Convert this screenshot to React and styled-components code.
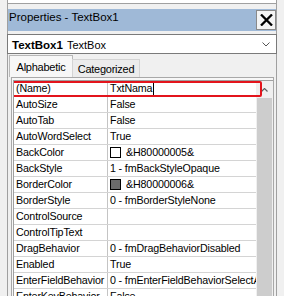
import React from 'react';
import styled, { createGlobalStyle } from 'styled-components';

const Global = createGlobalStyle`
  html, body { margin: 0; padding: 0; background: #f0f0f0; overflow: hidden; }
  body { font-family: "Liberation Sans", Arial, sans-serif; color: #000; }
  #root { height: 296px; overflow: hidden; }
`;

const Window = styled.div`
  margin-left: 7px;
  width: 270px;
  height: 296px;
  box-sizing: border-box;
  border-left: 1px solid #a0a0a0;
  border-right: 1px solid #a0a0a0;
  display: flex;
  flex-direction: column;
`;

const PrevPane = styled.div`
  height: 3px;
  background: #fff;
  border-bottom: 1px solid #a0a0a0;
`;

const TitleBar = styled.div`
  margin-top: 5px;
  height: 22px;
  background: #9fb9d7;
  display: flex;
  align-items: flex-start;
  justify-content: space-between;
`;

const Title = styled.span`
  font-size: 11.5px;
  line-height: 15px;
  padding: 1px 0 0 1px;
  white-space: nowrap;
`;

const CloseButton = styled.div`
  margin-top: 1px;
  width: 20px;
  height: 20px;
  box-sizing: border-box;
  border: 1px solid #8a8a8a;
  background: #f4f4f4;
  display: flex;
  align-items: center;
  justify-content: center;
`;

const Combo = styled.div`
  margin: 3px -1px 0;
  height: 20px;
  box-sizing: border-box;
  border: 1px solid #7a7a7a;
  background: #fff;
  display: flex;
  align-items: center;
  padding: 0 6px 0 4px;
  font-size: 11px;
`;

const ComboText = styled.span`
  flex: 1;
  white-space: nowrap;
  line-height: 16px;
  padding-top: 1px;
`;

const Bold = styled.b`
  font-size: 11.5px;
  margin-right: 4px;
`;

const TabStrip = styled.div`
  margin-top: 1px;
  height: 22px;
  display: flex;
  align-items: flex-end;
  padding-left: 1px;
`;

const Tab = styled.div`
  box-sizing: border-box;
  height: ${p => (p.$active ? 22 : 18)}px;
  width: ${p => p.$w}px;
  margin-left: ${p => (p.$first ? 0 : -1)}px;
  border: 1px solid ${p => (p.$active ? '#b8b8b8' : '#d4d4d4')};
  border-bottom: none;
  background: ${p => (p.$active ? '#f7f7f7' : '#ececec')};
  font-size: 11px;
  letter-spacing: -0.25px;
  display: flex;
  align-items: center;
  justify-content: center;
  padding-top: ${p => (p.$active ? 0 : 1)}px;
`;

const Page = styled.div`
  flex: 1;
  min-height: 0;
  margin: 0 2px 0 3px;
  border: 1px solid #a8a8a8;
  border-bottom: none;
  background: #f7f7f7;
  padding: 2px 0 0 1px;
  display: flex;
  flex-direction: column;
`;

const Grid = styled.div`
  flex: 1;
  min-height: 0;
  display: flex;
  position: relative;
  border-left: 1px solid #a0a0a0;
  border-top: 1px solid #a0a0a0;
  background: #fff;
  overflow: hidden;
`;

const Rows = styled.div`
  flex: 1;
  min-width: 0;
`;

const Row = styled.div`
  display: grid;
  grid-template-columns: 94px 1fr;
  height: 16px;
  box-sizing: border-box;
  border-bottom: 1px solid #d4d4d4;
  font-size: 10.7px;
  letter-spacing: -0.15px;
`;

const NameCell = styled.div`
  box-sizing: border-box;
  border-right: 1px solid #c4c4c4;
  padding-left: 2px;
  line-height: 15px;
  white-space: nowrap;
  overflow: hidden;
`;

const ValueCell = styled.div`
  padding-left: 2px;
  display: flex;
  align-items: center;
  white-space: nowrap;
  overflow: hidden;
  line-height: 15px;
`;

const Swatch = styled.span`
  flex: none;
  width: 11px;
  height: 11px;
  box-sizing: border-box;
  border: 1px solid #000;
  background: ${p => p.$color};
  margin-right: 5px;
`;

const Caret = styled.span`
  display: inline-block;
  width: 1px;
  height: 12px;
  background: #000;
  margin-left: 1px;
`;

const Highlight = styled.div`
  position: absolute;
  left: -2px;
  top: 0;
  width: 250px;
  height: 16px;
  box-sizing: border-box;
  border: 2px solid #e3141c;
  border-radius: 2px;
  pointer-events: none;
`;

const Scrollbar = styled.div`
  flex: none;
  width: 17px;
  background: #f0f0f0;
  display: flex;
  flex-direction: column;
`;

const ScrollUp = styled.div`
  height: 17px;
  display: flex;
  align-items: center;
  justify-content: center;
`;

const Thumb = styled.div`
  flex: 1;
  margin: 0 1px;
  background: #cdcdcd;
`;

const props = [
  ['(Name)', 'TxtNama', null, true],
  ['AutoSize', 'False'],
  ['AutoTab', 'False'],
  ['AutoWordSelect', 'True'],
  ['BackColor', '&H80000005&', '#ffffff'],
  ['BackStyle', '1 - fmBackStyleOpaque'],
  ['BorderColor', '&H80000006&', '#6b6b6b'],
  ['BorderStyle', '0 - fmBorderStyleNone'],
  ['ControlSource', ''],
  ['ControlTipText', ''],
  ['DragBehavior', '0 - fmDragBehaviorDisabled'],
  ['Enabled', 'True'],
  ['EnterFieldBehavior', '0 - fmEnterFieldBehaviorSelectAll'],
  ['EnterKeyBehavior', 'False'],
  ['ForeColor', '&H80000008&', '#000000'],
];

export default function App() {
  return (
    <>
      <Global />
      <Window>
        <PrevPane />
        <TitleBar>
          <Title>Properties - TextBox1</Title>
          <CloseButton>
            <svg width="13" height="12" viewBox="0 0 13 12">
              <path d="M1 0.5 L12 11.5 M12 0.5 L1 11.5" stroke="#000" strokeWidth="2.3" />
            </svg>
          </CloseButton>
        </TitleBar>
        <Combo>
          <ComboText>
            <Bold>TextBox1</Bold>TextBox
          </ComboText>
          <svg width="8" height="5" viewBox="0 0 8 5">
            <path d="M0.5 0.5 L4 4 L7.5 0.5" stroke="#555" strokeWidth="1" fill="none" />
          </svg>
        </Combo>
        <TabStrip>
          <Tab $active $first $w={64}>Alphabetic</Tab>
          <Tab $w={68}>Categorized</Tab>
        </TabStrip>
        <Page>
          <Grid>
            <Rows>
              {props.map(([name, value, color, caret]) => (
                <Row key={name}>
                  <NameCell>{name}</NameCell>
                  <ValueCell>
                    {color && <Swatch $color={color} />}
                    {value}
                    {caret && <Caret />}
                  </ValueCell>
                </Row>
              ))}
            </Rows>
            <Scrollbar>
              <ScrollUp>
                <svg width="7" height="4" viewBox="0 0 7 4">
                  <path d="M0.5 3.5 L3.5 0.5 L6.5 3.5" stroke="#606060" strokeWidth="1.2" fill="none" />
                </svg>
              </ScrollUp>
              <Thumb />
            </Scrollbar>
            <Highlight />
          </Grid>
        </Page>
      </Window>
    </>
  );
}
